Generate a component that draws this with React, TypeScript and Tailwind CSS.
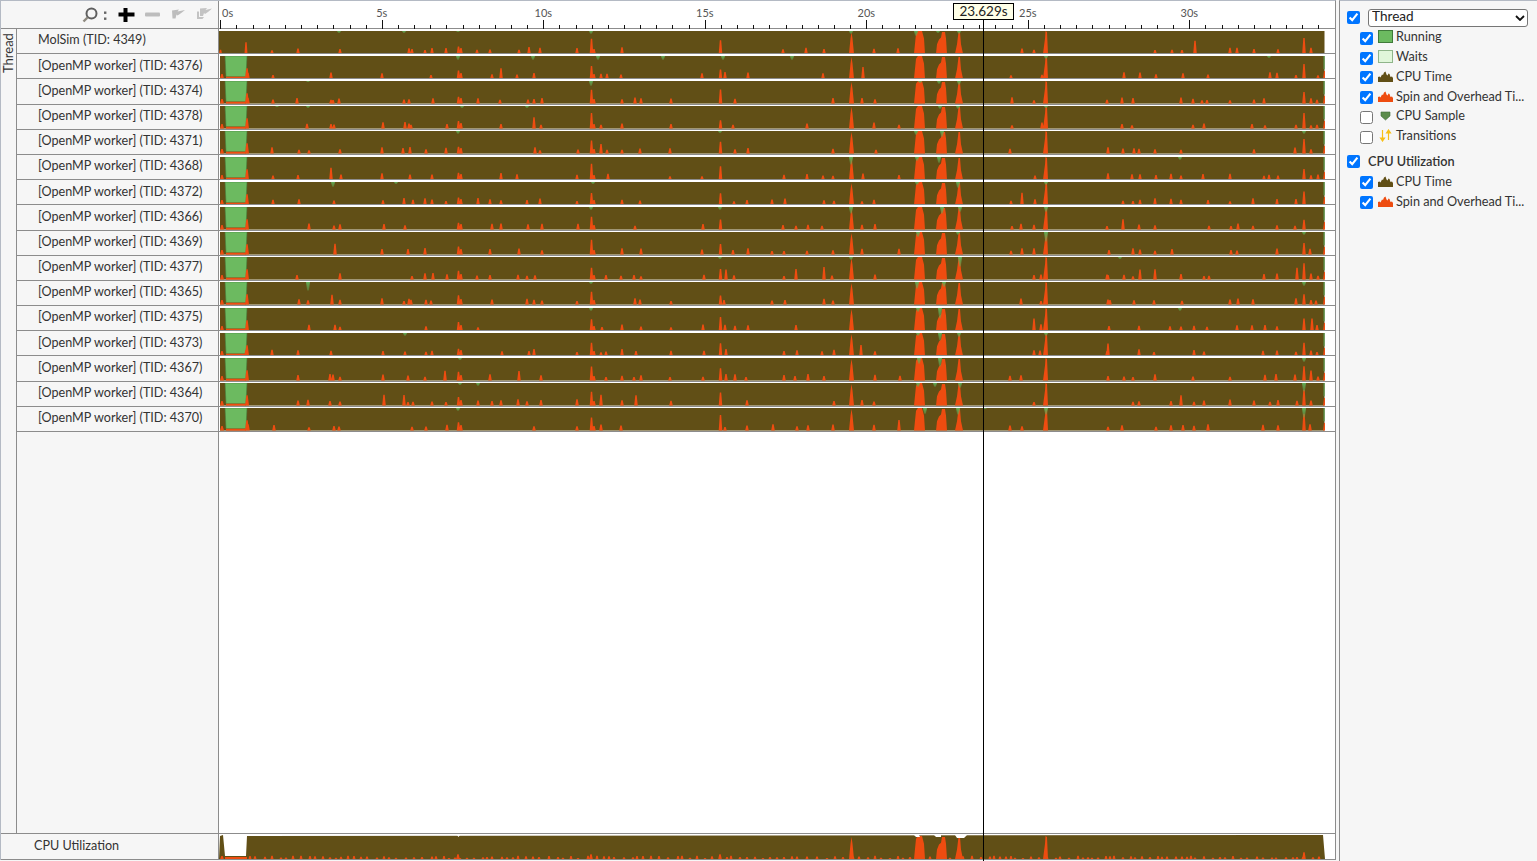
import React from "react";

const BROWN = "#614f16";
const ORANGE = "#ee4c10";
const FONT = { fontFamily: '"Lato", "Liberation Sans", sans-serif' };

function rng(seed: number) {
  return () => {
    seed |= 0;
    seed = (seed + 0x6d2b79f5) | 0;
    let t = Math.imul(seed ^ (seed >>> 15), 1 | seed);
    t = (t + Math.imul(t ^ (t >>> 7), 61 | t)) ^ t;
    return ((t ^ (t >>> 14)) >>> 0) / 4294967296;
  };
}

const OFFSET = 219; // page x of the chart column
const H = 24;

const pool = [246, 272, 297, 307, 330, 333, 339, 382, 403, 408, 411, 425, 431, 445, 477, 490, 500, 517, 527, 533, 540, 577, 600, 606, 621, 634, 640, 670, 702, 724, 733, 746, 771, 783, 795, 806, 822, 832, 861, 874, 898, 1010, 1020, 1033, 1040, 1106, 1108, 1122, 1132, 1138, 1154, 1170, 1181, 1193, 1202, 1207, 1229, 1236, 1252, 1263, 1268, 1276, 1295, 1310, 1316];

const tri = (x: number, h: number, w = 1.8) => `M${x - w - OFFSET} ${H}L${x - 0.7 - OFFSET} ${H - h}L${x + 0.7 - OFFSET} ${H - h}L${x + w - OFFSET} ${H}Z`;

const bigs = [
  `M${914 - OFFSET} ${H}L${916 - OFFSET} 3L${918 - OFFSET} 0L${922 - OFFSET} 0L${924 - OFFSET} 8L${925 - OFFSET} ${H}Z`,
  `M${936 - OFFSET} ${H}L${937 - OFFSET} 14L${939 - OFFSET} 9L${941 - OFFSET} 7L${942 - OFFSET} 1L${945 - OFFSET} 1L${946 - OFFSET} 8L${947 - OFFSET} ${H}Z`,
  `M${955 - OFFSET} ${H}L${957 - OFFSET} 14L${958.5 - OFFSET} 1L${960 - OFFSET} 1L${961 - OFFSET} 14L${963 - OFFSET} ${H}Z`,
  `M${1043 - OFFSET} ${H}L${1045 - OFFSET} 8L${1045.5 - OFFSET} 0L${1047 - OFFSET} 1L${1048 - OFFSET} ${H}Z`,
  `M${849 - OFFSET} ${H}L${850.5 - OFFSET} 8L${851.5 - OFFSET} 1L${852.5 - OFFSET} 8L${854 - OFFSET} ${H}Z`,
];

type Wait = [number, number];
const fixedWaits: Record<number, Wait[]> = {
  0: [[339, 2], [404, 2], [458, 1], [591, 3], [851, 3], [916, 5], [938, 2], [959, 3]],
  1: [[458, 4], [533, 4], [598, 4], [663, 4], [723, 4], [792, 4], [1046, 3], [1269, 2]],
  2: [[308, 1], [591, 5], [920, 2], [939, 3], [959, 4]],
  3: [[277, 1], [308, 2], [462, 2], [527, 2], [940, 3], [958, 3], [1046, 2]],
  4: [[458, 3], [720, 2], [1304, 3], [916, 4], [942, 6]],
  5: [[851, 8], [917, 4], [939, 6], [1180, 3]],
  6: [[333, 5], [396, 2], [593, 2], [917, 3], [958, 6], [1046, 3]],
  7: [[591, 3], [720, 3], [851, 7], [1046, 5], [942, 7], [960, 5]],
  8: [[1046, 10], [958, 3], [918, 5], [1304, 3]],
  9: [[960, 10], [720, 2], [851, 3], [1120, 2]],
  10: [[308, 9], [917, 7], [944, 5], [591, 2], [1304, 4]],
  11: [[591, 3], [940, 11], [918, 4], [1180, 3]],
  12: [[405, 3], [940, 8], [959, 4], [918, 3], [1046, 3]],
  13: [[940, 9], [919, 6], [1304, 4], [460, 2]],
  14: [[478, 3], [1304, 9], [918, 4], [935, 4], [960, 5], [460, 2]],
  15: [[458, 3], [985, 1], [925, 6], [958, 7], [1046, 7], [1304, 10]],
};

function buildRow(i: number) {
  const r = rng(i * 97 + 13);
  const parts: string[] = [];
  for (const x of pool) {
    if (r() < 0.52) {
      const tall = r();
      parts.push(tri(x + Math.round(r() * 2), tall > 0.95 ? 10 + r() * 4 : 3.5 + r() * 3.5));
    }
  }
  parts.push(tri(458.5, 7 + r() * 3));
  parts.push(tri(461, 6));
  parts.push(tri(591.5, 12 + r() * 5));
  parts.push(tri(594, 5));
  parts.push(tri(720.5, 7 + r() * 10));
  parts.push(tri(1304, 10 + r() * 8));
  parts.push(...bigs);
  if (i > 0) {
    parts.push(tri(222, 5, 2), tri(247, 11, 2));
    parts.push(`M${1323 - OFFSET} ${H}L${1324 - OFFSET} 16L${1325 - OFFSET} 16L${1325 - OFFSET} ${H}Z`);
  } else {
    parts.push(tri(220.5, 4, 1.5), tri(246, 12, 1.5));
  }
  const waits = (fixedWaits[i] || []).map(
    ([x, d]) => `${x - 2 - OFFSET},0 ${x + 2 - OFFSET},0 ${x + 0.8 - OFFSET},${d} ${x - 0.8 - OFFSET},${d}`
  );
  return { orange: parts.join(""), waits };
}

const workers = ["4376", "4374", "4378", "4371", "4368", "4372", "4366", "4369", "4377", "4365", "4375", "4373", "4367", "4364", "4370"];
const rows = [{ label: "MolSim (TID: 4349)" }, ...workers.map((t) => ({ label: `[OpenMP worker] (TID: ${t})` }))];
const rowData = rows.map((_, i) => buildRow(i));

function RowChart({ index }: { index: number }) {
  const d = rowData[index];
  const first = index === 0;
  const left = first ? 0 : 1;
  const width = 1324.5 - OFFSET - left;
  return (
    <svg width="1117" height="22.6" viewBox="0 0 1117 24" preserveAspectRatio="none" className="block shrink-0">
      <defs>
        <linearGradient id={`wait${index}`} x1="0" y1="0" x2="0" y2="1">
          <stop offset="0" stopColor="#62ac56" />
          <stop offset="1" stopColor="#62ac56" stopOpacity="0.4" />
        </linearGradient>
      </defs>
      <rect x={left} y="0" width={width} height="24" fill={BROWN} />
      {!first && <path d="M6 0L28 0L27 22L7 22Z" fill="#6cba60" stroke="#47803f" strokeWidth="0.6" />}
      {!first && <rect x="7" y="22" width="20" height="2" fill={ORANGE} />}
      <path d={d.orange} fill={ORANGE} />
      {d.waits.map((p, i) => (
        <polygon key={i} points={p} fill={`url(#wait${index})`} />
      ))}
      {!first && <rect x="1104.5" y="0" width="1.2" height="14" fill="#5a9a50" />}
    </svg>
  );
}

const footerPath = (() => {
  const r = rng(501);
  const parts: string[] = [];
  for (let x = 250; x < 1320; x += 4 + Math.floor(r() * 7)) {
    parts.push(tri(x, 1 + r() * 2.5, 1.5));
  }
  parts.push(tri(458, 5), tri(591, 5), tri(720, 5), tri(1304, 7));
  parts.push(...bigs);
  parts.push(tri(222, 3), `M6 22L28 22L28 24L6 24Z`);
  return parts.join("");
})();

function FooterChart() {
  return (
    <svg width="1117" height="24" viewBox="0 0 1117 25" preserveAspectRatio="none" className="block shrink-0">
      <path d="M0 25L1 1L4 0L6 22L27 22L28 1L1104 0L1106 25Z" fill={BROWN} />
      <path d={footerPath} transform="translate(0 1)" fill={ORANGE} />
      <path d="M695 0L700 0L701 2L697 2ZM715 0L722 0L722 2L717 2ZM736 0L748 0L745 3L738 3ZM238 0L241 0L239.5 2Z" fill="#fff" />
    </svg>
  );
}

const ticks = Array.from({ length: 69 }, (_, i) => i);
const labels = [0, 5, 10, 15, 20, 25, 30];

function Ruler() {
  return (
    <div className="relative h-full flex-1 bg-white">
      <svg width="1117" height="28" viewBox="0 0 1117 28" className="absolute left-0 top-0">
        {ticks.map((i) => {
          const x = Math.round(1.3 + i * 16.15) + 0.5;
          return <line key={i} x1={x} x2={x} y1={i % 10 === 0 ? 19 : 24} y2="28" stroke="#111" strokeWidth="1" />;
        })}
      </svg>
      {labels.map((s) => (
        <span
          key={s}
          className="absolute top-[5px] text-[11px] leading-[14px] text-[#555]"
          style={s === 0 ? { left: 3 } : { left: 1.3 + s * 32.3, transform: "translateX(-50%)" }}
        >
          {s}s
        </span>
      ))}
    </div>
  );
}

function Toolbar() {
  return (
    <div className="flex h-full w-[218px] shrink-0 items-center justify-end border-r border-[#8c8c8c] pr-[6px]">
      <svg width="130" height="20" viewBox="0 0 130 20" className="mt-[1px]">
        <circle cx="9.5" cy="8.5" r="5" fill="none" stroke="#5f5f5f" strokeWidth="2" />
        <line x1="5.5" y1="12.5" x2="1.5" y2="16.5" stroke="#8f8a80" strokeWidth="2.4" />
        <rect x="22" y="6.5" width="2.4" height="2.4" fill="#666" />
        <rect x="22" y="12.5" width="2.4" height="2.4" fill="#666" />
        <path d="M41.5 3H45.5V7.5H52.5V11.5H45.5V17H41.5V11.5H36.5V7.5H41.5Z" fill="#000" />
        <rect x="63" y="7.5" width="15" height="4" rx="1" fill="#bdbdbd" />
        <path d="M90 5.5L97 4.5L95.5 6.5L103 5C100 7.5 97.5 9.5 95.5 10.5L94.5 9.5L93.5 13.5L90.5 13.5Z" fill="#bdbdbd" />
        <path d="M118 3.5L125 3L123.5 5L130 3.5C127.5 6 125 8 123 9L122 8L121 11L118 11Z" fill="#c3c3c3" />
        <path d="M115 6.5L117 6.5L117 12L122 12L120.5 14L115 14Z" fill="#c3c3c3" />
      </svg>
    </div>
  );
}

function Mountain({ color }: { color: string }) {
  return (
    <svg width="15" height="12" viewBox="0 0 15 12" className="shrink-0">
      <path d="M0 12V7L1.5 6.5L2.5 7.5L4 4.5L5 5L6 2.5L7.5 1.5L8.5 4.5L9.5 5.5L10.5 3.5L11.5 4L12.5 7L14 6.5L15 8V12Z" fill={color} />
    </svg>
  );
}

function Swatch({ bg, border }: { bg: string; border: string }) {
  return <span className="block h-[13px] w-[15px] shrink-0 border" style={{ backgroundColor: bg, borderColor: border }} />;
}

function Shield() {
  return (
    <svg width="15" height="12" viewBox="0 0 15 12" className="shrink-0">
      <path d="M3 2H12V6L7.5 10L3 6Z" fill="#5c8c4c" stroke="#3f6b3a" strokeWidth="0.6" />
    </svg>
  );
}

function Arrows() {
  return (
    <svg width="15" height="13" viewBox="0 0 15 13" className="shrink-0">
      <path d="M4.5 1V11M2.5 9L4.5 12L6.5 9Z" stroke="#f7bf16" strokeWidth="1.2" fill="#f7bf16" />
      <path d="M10.5 11V2M8.5 4L10.5 1L12.5 4Z" stroke="#f7bf16" strokeWidth="1.2" fill="#f7bf16" />
    </svg>
  );
}

function LegendRow({ label, checked, icon }: { label: string; checked: boolean; icon: React.ReactNode }) {
  return (
    <div className="flex h-[19.75px] items-center text-[12.7px]">
      <input type="checkbox" defaultChecked={checked} className="mt-[3px] ml-[20px] mr-[5px] h-[13px] w-[13px] shrink-0" />
      <span className="flex w-[18px] shrink-0 items-center">{icon}</span>
      <span className="mb-[1px] whitespace-nowrap">{label}</span>
    </div>
  );
}

export default function App() {
  return (
    <div className="flex h-[861px] w-[1537px] overflow-hidden bg-[#f6f6f6] text-[12.6px] text-[#333]" style={FONT}>
      <div className="relative flex h-[860px] w-[1336px] shrink-0 flex-col border-l border-t border-r border-l-[#b4bac4] border-t-[#b4bac4] border-r-[#8c8c8c]">
        <div className="flex h-[28px] shrink-0 border-b border-[#8c8c8c]">
          <Toolbar />
          <Ruler />
        </div>
        <div className="flex min-h-0 flex-1">
          <div className="flex w-[16px] shrink-0 justify-center border-r border-[#8c8c8c] pt-[4px]">
            <span className="h-[40px] rotate-180 text-[13px] leading-[15px] [writing-mode:vertical-rl]">Thread</span>
          </div>
          <div className="flex min-w-0 flex-1 flex-col">
            {rows.map((row, i) => (
              <div key={row.label} className="flex h-[25.2px] shrink-0">
                <div className="flex w-[202px] shrink-0 items-center border-r border-b border-[#8c8c8c] pb-[1.4px] pl-[21px]">
                  <span className="whitespace-nowrap leading-[22px]">{row.label}</span>
                </div>
                <div className="flex flex-1 flex-col justify-end overflow-hidden border-b border-[#8c8c8c] bg-white">
                  <RowChart index={i} />
                </div>
              </div>
            ))}
            <div className="flex min-h-0 flex-1">
              <div className="w-[202px] shrink-0 border-r border-[#8c8c8c]" />
              <div className="flex-1 bg-white" />
            </div>
          </div>
        </div>
        <div className="flex h-[27px] shrink-0 border-y border-[#8c8c8c]">
          <div className="flex w-[218px] shrink-0 items-center border-r border-[#8c8c8c] pb-[1px] pl-[33px]">CPU Utilization</div>
          <div className="flex flex-1 items-end overflow-hidden bg-white">
            <FooterChart />
          </div>
        </div>
        {/* time cursor */}
        <div className="absolute bottom-[-1px] left-[982px] top-[19px] w-[1.3px] bg-black" />
        <div className="absolute left-[952px] top-[2px] flex h-[17px] w-[61px] items-center justify-center border border-black bg-[#ffffe8] text-[13.5px] leading-none text-[#222]">
          23.629s
        </div>
      </div>
      <div className="ml-[3px] flex min-w-0 flex-1 flex-col border-l border-t border-l-[#8c8c8c] border-t-[#b4bac4] pt-[7px] pr-[8px] leading-[18px]">
        <div className="flex h-[19px] items-center">
          <input type="checkbox" defaultChecked className="ml-[7px] mr-[8px] h-[13px] w-[13px] shrink-0" />
          <div className="relative h-[18px] w-[160px]">
            <select className="block h-[18px] w-full appearance-none rounded-[3px] border border-[#767676] bg-white pt-0 pb-[1px] pl-[3px] text-[13.6px] leading-none text-[#222]">
              <option>Thread</option>
            </select>
            <svg width="10" height="6" viewBox="0 0 10 6" className="pointer-events-none absolute right-[3px] top-[6px]">
              <path d="M1 1L5 5L9 1" fill="none" stroke="#111" strokeWidth="1.8" />
            </svg>
          </div>
        </div>
        <div className="flex flex-col">
          <LegendRow checked label="Running" icon={<Swatch bg="#6cba60" border="#3f7a3a" />} />
          <LegendRow checked label="Waits" icon={<Swatch bg="#e0f6da" border="#8fb58a" />} />
          <LegendRow checked label="CPU Time" icon={<Mountain color={BROWN} />} />
          <LegendRow checked label="Spin and Overhead Ti..." icon={<Mountain color={ORANGE} />} />
          <LegendRow checked={false} label="CPU Sample" icon={<Shield />} />
          <LegendRow checked={false} label="Transitions" icon={<Arrows />} />
        </div>
        <div className="mt-[6px] flex h-[19px] items-center">
          <input type="checkbox" defaultChecked className="ml-[7px] mr-[8px] h-[13px] w-[13px] shrink-0" />
          <span className="text-[12.7px] font-semibold">CPU Utilization</span>
        </div>
        <div className="mt-[1px] flex flex-col">
          <LegendRow checked label="CPU Time" icon={<Mountain color={BROWN} />} />
          <LegendRow checked label="Spin and Overhead Ti..." icon={<Mountain color={ORANGE} />} />
        </div>
      </div>
    </div>
  );
}
